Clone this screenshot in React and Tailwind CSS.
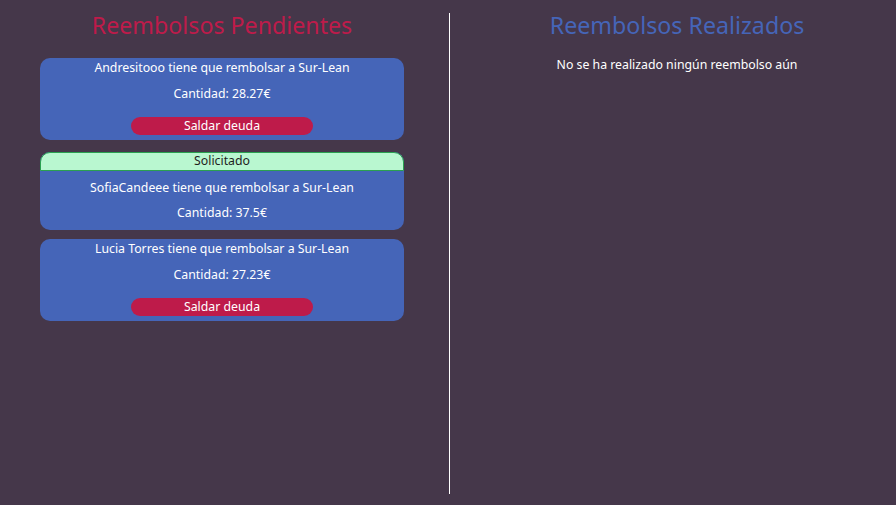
export default function App() {
  const font = { fontFamily: '"Noto Sans", "Open Sans", sans-serif' };
  const Card = ({ name, amount, solicitado, className = "" }) => (
    <div className={`w-[364px] rounded-[10px] bg-[#4565b8] text-white text-[12.3px] flex flex-col items-center ${className}`}>
      {solicitado && (
        <div className="w-full h-[19px] rounded-t-[10px] bg-[#b9f7d0] border border-[#2aa050] text-[#1f1f1f] flex items-center justify-center leading-none">
          Solicitado
        </div>
      )}
      <div className={`h-[18px] flex items-center leading-none ${solicitado ? "mt-[8px]" : "mt-[1px]"}`}>
        {name} tiene que rembolsar a Sur-Lean
      </div>
      <div className={`h-[18px] flex items-center leading-none ${solicitado ? "mt-[7px]" : "mt-[8px]"}`}>Cantidad: {amount}€</div>
      {!solicitado ? (
        <div className="mt-[14px] w-[182px] h-[18px] rounded-full bg-[#be1b4a] flex items-center justify-center leading-none">
          Saldar deuda
        </div>
      ) : (
        <div className="h-[8px]" />
      )}
    </div>
  );
  return (
    <div className="w-[896px] h-[505px] bg-[#45374a] flex" style={font}>
      <div className="w-[444px] flex flex-col items-center">
        <h1 className="mt-[12px] h-[28px] flex items-center text-[23.2px] leading-none text-[#be1b4a]">Reembolsos Pendientes</h1>
        <div className="mt-[18px] flex flex-col">
          <Card name="Andresitooo" amount="28.27" className="h-[82px]" />
          <Card name="SofiaCandeee" amount="37.5" solicitado className="mt-[12px]" />
          <Card name="Lucia Torres" amount="27.23" className="mt-[9px] h-[82px]" />
        </div>
      </div>
      <div className="w-px bg-white mt-[13px] mb-[11px] ml-[5px]" />
      <div className="flex-1 flex flex-col items-center pl-[8px]">
        <h1 className="mt-[12px] h-[28px] flex items-center text-[23.2px] leading-none text-[#4565b8]">Reembolsos Realizados</h1>
        <div className="mt-[16px] h-[18px] flex items-center text-[12.3px] leading-none text-white">No se ha realizado ningún reembolso aún</div>
      </div>
    </div>
  );
}
